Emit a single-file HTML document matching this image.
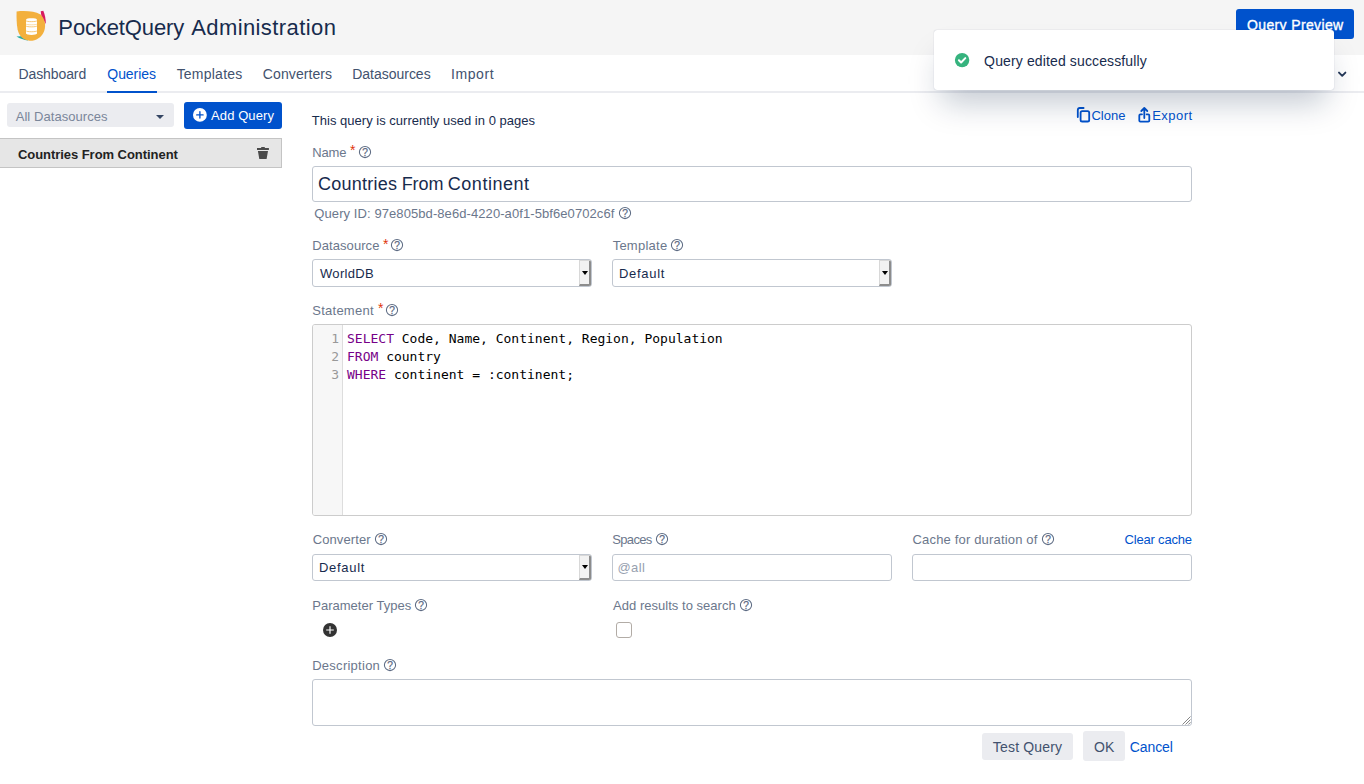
<!DOCTYPE html>
<html lang="en">
<head>
<meta charset="utf-8">
<title>PocketQuery Administration</title>
<style>
*{box-sizing:border-box;margin:0;padding:0}
html,body{width:1364px;height:784px;overflow:hidden;background:#fff}
body{font-family:"Liberation Sans",sans-serif;font-size:13px;color:#172b4d;position:relative}
.abs{position:absolute}
h1{font-size:22px;font-weight:400}
a{text-decoration:none;cursor:pointer}
label{font-weight:400}
.t{position:absolute;white-space:pre;line-height:20px;height:20px}
#header{left:0;top:0;width:1364px;height:55px;background:#f5f5f5}
#nav{left:0;top:55px;width:1364px;height:38px;background:#fff;border-bottom:2px solid #ebecf0}
.box{position:absolute;border:1px solid #c1c7d0;border-radius:3px;background:#fff}
.ddb{position:absolute;right:0;top:0;bottom:0;width:12px;background:#f2f2f2;border-left:1px solid #d8d8d8;border-top:1px solid #d8d8d8;border-right:2px solid #8c8c8c;border-bottom:2px solid #8c8c8c;border-radius:0 2px 2px 0}
.ddb:after{content:"";position:absolute;left:1.5px;top:50%;margin-top:-2px;border:3.2px solid transparent;border-top:4px solid #000;border-bottom:0}
.cm{position:absolute;white-space:pre;font-family:"DejaVu Sans Mono","Liberation Mono",monospace;font-size:13px;line-height:18px;height:18px;color:#000}
.kw{color:#770088}
.ln{color:#999;text-align:right;width:24px}
</style>
</head>
<body>

<div id="header" class="abs"></div>
<svg class="abs" style="left:14px;top:9px" width="34" height="34" viewBox="0 0 34 34">
  <path d="M2.5 27.5 C6 29.5 10 31 14 31.5 L12 27 Z" fill="#1fa9a4"/>
  <path d="M26.7 2.3 L29.3 1.7 C30.9 5.5 31.9 10 31.8 15 L27.5 8 Z" fill="#d81b60"/>
  <path d="M2.6 2.4 C12 1.6 21 2.2 26 5.2 C31 9 32.2 16 30.2 22 C27.8 28.6 21.6 32 15.6 31.8 C9.4 31.4 5 27.2 3.6 20.6 C2.6 15 2.4 8 2.6 2.4 Z" fill="#f3b03d"/>
  <path d="M12 10.4 C12 8.8 23 8.8 23 10.4 L23 24.6 C23 26.4 12 26.4 12 24.6 Z" fill="#fff"/>
  <g fill="none" stroke="#f3b03d" stroke-width="0.7">
    <path d="M12 11.6 C12 13 23 13 23 11.6"/>
    <path d="M12 14.9 C12 16.1 23 16.1 23 14.9" stroke-width="0.45"/>
    <path d="M12 16.8 C12 18.2 23 18.2 23 16.8"/>
    <path d="M12 21.7 C12 23.1 23 23.1 23 21.7"/>
  </g>
</svg>
<h1><span class="t" style="left:58.33px;top:12.04px;font-size:22px;color:#172b4d;letter-spacing:-0.122px;line-height:32px;height:32px">PocketQuery</span> <span class="t" style="left:191.18px;top:12.04px;font-size:22px;color:#172b4d;letter-spacing:0.408px;line-height:32px;height:32px">Administration</span></h1>
<div class="abs" style="left:1236px;top:9px;width:118px;height:30px;background:#0052cc;border-radius:3px"></div>
<div class="t" style="left:1247.01px;top:14.74px;font-size:14px;color:#fff;letter-spacing:0.362px;-webkit-text-stroke:0.35px #fff">Query Preview</div>
<div id="nav" class="abs"></div>
<a class="t" style="left:18.45px;top:63.74px;font-size:14px;color:#42526e;letter-spacing:-0.089px">Dashboard</a>
<a class="t" style="left:107.31px;top:63.74px;font-size:14px;color:#0052cc;letter-spacing:-0.057px">Queries</a>
<a class="t" style="left:176.64px;top:63.74px;font-size:14px;color:#42526e;letter-spacing:0.229px">Templates</a>
<a class="t" style="left:262.85px;top:63.74px;font-size:14px;color:#42526e;letter-spacing:0.088px">Converters</a>
<a class="t" style="left:352.25px;top:63.74px;font-size:14px;color:#42526e;letter-spacing:-0.021px">Datasources</a>
<a class="t" style="left:451.04px;top:63.74px;font-size:14px;color:#42526e;letter-spacing:0.585px">Import</a>
<div class="abs" style="left:107px;top:91px;width:50px;height:2px;background:#0052cc"></div>
<svg class="abs" style="left:1336px;top:68px" width="12" height="12" viewBox="0 0 12 12"><path d="M3 4.6 L6.2 7.8 L9.4 4.6" fill="none" stroke="#253858" stroke-width="1.9" stroke-linecap="round" stroke-linejoin="round"/></svg>
<div class="abs" style="left:7px;top:103px;width:167px;height:24px;background:#ebecf0;border-radius:3px"></div>
<div class="t" style="left:15.67px;top:106.82px;font-size:13px;color:#7a869a;letter-spacing:0.064px">All Datasources</div>
<div class="abs" style="left:156px;top:115px;width:0;height:0;border:4px solid transparent;border-top:4px solid #344563;border-bottom:0"></div>
<div class="abs" style="left:184px;top:102px;width:98px;height:27px;background:#0052cc;border-radius:3px"></div>
<svg class="abs" style="left:192px;top:107px" width="16" height="16" viewBox="0 0 16 16"><circle cx="7.9" cy="7.9" r="6.9" fill="#fff"/><path d="M7.9 4.7 V11.1 M4.7 7.9 H11.1" stroke="#0052cc" stroke-width="1.35" stroke-linecap="round"/></svg>
<div class="t" style="left:211.07px;top:105.92px;font-size:13px;color:#fff;letter-spacing:0.090px">Add Query</div>
<div class="abs" style="left:-1px;top:138px;width:283px;height:30px;background:#e6e6e6;border:1px solid #c4c4c4"></div>
<div class="t" style="left:17.92px;top:144.82px;font-size:13px;color:#222;letter-spacing:-0.046px;font-weight:700">Countries From Continent</div>
<svg class="abs" style="left:256px;top:146px" width="14" height="14" viewBox="0 0 14 14"><path d="M5.2 0.9 H8.8 V2 H12.9 V4.1 H1 V2 H5.2 Z M1.9 5 H12 L10.6 13 H3.3 Z" fill="#4a4a4a"/></svg>
<div class="t" style="left:311.84px;top:110.82px;font-size:13px;color:#172b4d;letter-spacing:0.016px">This query is currently used in 0 pages</div>
<svg class="abs" style="left:1075px;top:106px" width="17" height="18" viewBox="0 0 17 18"><g fill="none" stroke="#0052cc" stroke-width="1.8" stroke-linejoin="round" stroke-linecap="round"><path d="M2.8 11 V4 Q2.8 2 4.8 2 H8.6"/><rect x="5.6" y="5.2" width="8.6" height="10.3" rx="1.6"/></g></svg>
<a class="t" style="left:1091.41px;top:106.02px;font-size:13px;color:#0052cc;letter-spacing:0.009px">Clone</a>
<svg class="abs" style="left:1137px;top:106px" width="15" height="18" viewBox="0 0 15 18"><g fill="none" stroke="#0052cc" stroke-width="1.8" stroke-linejoin="round" stroke-linecap="round"><path d="M5 8.3 H3.4 Q2.3 8.3 2.3 9.4 V14.6 Q2.3 15.7 3.4 15.7 H11.2 Q12.3 15.7 12.3 14.6 V9.4 Q12.3 8.3 11.2 8.3 H9.6"/><path d="M7.3 12 V2.4 M4.3 5 L7.3 2 L10.3 5"/></g></svg>
<a class="t" style="left:1152.22px;top:106.02px;font-size:13px;color:#0052cc;letter-spacing:0.458px">Export</a>
<label class="t" style="left:312.22px;top:143.02px;font-size:13px;color:#6b778c;letter-spacing:-0.157px">Name</label>
<div class="t" style="left:350.0px;top:143.2px;font-size:14px;color:#de350b;line-height:14px;height:14px">*</div>
<svg class="abs" style="left:357.9px;top:145.4px" width="14" height="14" viewBox="0 0 14 14"><circle cx="7" cy="7" r="5.6" fill="none" stroke="#5e6c84" stroke-width="1.05"/><text x="7.1" y="10.6" text-anchor="middle" font-family="Liberation Sans,sans-serif" font-size="10.2" fill="#5e6c84" stroke="#5e6c84" stroke-width="0.25">?</text></svg>
<div class="box" style="left:312px;top:166px;width:880px;height:36px"></div>
<div><span class="t" style="left:318.09px;top:168.24px;font-size:18px;color:#172b4d;letter-spacing:0.250px;line-height:32px;height:32px">Countries</span> <span class="t" style="left:401.69px;top:168.24px;font-size:18px;color:#172b4d;letter-spacing:-0.073px;line-height:32px;height:32px">From</span> <span class="t" style="left:447.79px;top:168.24px;font-size:18px;color:#172b4d;letter-spacing:0.529px;line-height:32px;height:32px">Continent</span></div>
<div class="t" style="left:314.34px;top:203.72px;font-size:13px;color:#6b778c;letter-spacing:0.082px">Query ID: 97e805bd-8e6d-4220-a0f1-5bf6e0702c6f</div>
<svg class="abs" style="left:618.0px;top:206.0px" width="14" height="14" viewBox="0 0 14 14"><circle cx="7" cy="7" r="5.6" fill="none" stroke="#5e6c84" stroke-width="1.05"/><text x="7.1" y="10.6" text-anchor="middle" font-family="Liberation Sans,sans-serif" font-size="10.2" fill="#5e6c84" stroke="#5e6c84" stroke-width="0.25">?</text></svg>
<label class="t" style="left:312.22px;top:236.32px;font-size:13px;color:#6b778c;letter-spacing:0.081px">Datasource</label>
<div class="t" style="left:383.0px;top:236.5px;font-size:14px;color:#de350b;line-height:14px;height:14px">*</div>
<svg class="abs" style="left:390.2px;top:238.4px" width="14" height="14" viewBox="0 0 14 14"><circle cx="7" cy="7" r="5.6" fill="none" stroke="#5e6c84" stroke-width="1.05"/><text x="7.1" y="10.6" text-anchor="middle" font-family="Liberation Sans,sans-serif" font-size="10.2" fill="#5e6c84" stroke="#5e6c84" stroke-width="0.25">?</text></svg>
<div class="box" style="left:312px;top:259px;width:280px;height:28px"><div class="ddb"></div></div>
<div class="t" style="left:320.01px;top:263.82px;font-size:13px;color:#172b4d;letter-spacing:0.310px">WorldDB</div>
<label class="t" style="left:612.64px;top:236.32px;font-size:13px;color:#6b778c;letter-spacing:0.257px">Template</label>
<svg class="abs" style="left:670.0px;top:238.4px" width="14" height="14" viewBox="0 0 14 14"><circle cx="7" cy="7" r="5.6" fill="none" stroke="#5e6c84" stroke-width="1.05"/><text x="7.1" y="10.6" text-anchor="middle" font-family="Liberation Sans,sans-serif" font-size="10.2" fill="#5e6c84" stroke="#5e6c84" stroke-width="0.25">?</text></svg>
<div class="box" style="left:612px;top:259px;width:280px;height:28px"><div class="ddb"></div></div>
<div class="t" style="left:619.02px;top:263.82px;font-size:13px;color:#172b4d;letter-spacing:0.691px">Default</div>
<label class="t" style="left:312.23px;top:300.92px;font-size:13px;color:#6b778c;letter-spacing:0.259px">Statement</label>
<div class="t" style="left:378.0px;top:301.1px;font-size:14px;color:#de350b;line-height:14px;height:14px">*</div>
<svg class="abs" style="left:385.3px;top:303.0px" width="14" height="14" viewBox="0 0 14 14"><circle cx="7" cy="7" r="5.6" fill="none" stroke="#5e6c84" stroke-width="1.05"/><text x="7.1" y="10.6" text-anchor="middle" font-family="Liberation Sans,sans-serif" font-size="10.2" fill="#5e6c84" stroke="#5e6c84" stroke-width="0.25">?</text></svg>
<div class="abs" style="left:312px;top:324px;width:880px;height:192px;border:1px solid #ccc;border-radius:3px;background:#fff;overflow:hidden"><div class="abs" style="left:0;top:0;width:30px;height:190px;background:#f7f7f7;border-right:1px solid #ddd"></div></div>
<div class="cm ln" style="left:315px;top:330px">1</div>
<div class="cm" style="left:347px;top:330px"><span class="kw">SELECT</span> Code, Name, Continent, Region, Population</div>
<div class="cm ln" style="left:315px;top:348px">2</div>
<div class="cm" style="left:347px;top:348px"><span class="kw">FROM</span> country</div>
<div class="cm ln" style="left:315px;top:366px">3</div>
<div class="cm" style="left:347px;top:366px"><span class="kw">WHERE</span> continent = :continent;</div>
<label class="t" style="left:312.71px;top:530.12px;font-size:13px;color:#6b778c;letter-spacing:0.096px">Converter</label>
<svg class="abs" style="left:374.0px;top:532.3px" width="14" height="14" viewBox="0 0 14 14"><circle cx="7" cy="7" r="5.6" fill="none" stroke="#5e6c84" stroke-width="1.05"/><text x="7.1" y="10.6" text-anchor="middle" font-family="Liberation Sans,sans-serif" font-size="10.2" fill="#5e6c84" stroke="#5e6c84" stroke-width="0.25">?</text></svg>
<div class="box" style="left:312px;top:554px;width:280px;height:27px"><div class="ddb"></div></div>
<div class="t" style="left:319.02px;top:557.92px;font-size:13px;color:#172b4d;letter-spacing:0.691px">Default</div>
<label class="t" style="left:612.23px;top:530.12px;font-size:13px;color:#6b778c;letter-spacing:-0.654px">Spaces</label>
<svg class="abs" style="left:655.4px;top:532.3px" width="14" height="14" viewBox="0 0 14 14"><circle cx="7" cy="7" r="5.6" fill="none" stroke="#5e6c84" stroke-width="1.05"/><text x="7.1" y="10.6" text-anchor="middle" font-family="Liberation Sans,sans-serif" font-size="10.2" fill="#5e6c84" stroke="#5e6c84" stroke-width="0.25">?</text></svg>
<div class="box" style="left:612px;top:554px;width:280px;height:27px"></div>
<div class="t" style="left:617.49px;top:557.92px;font-size:13px;color:#97a0af;letter-spacing:0.382px">@all</div>
<label class="t" style="left:912.51px;top:530.12px;font-size:13px;color:#6b778c;letter-spacing:0.172px">Cache for duration of</label>
<svg class="abs" style="left:1040.5px;top:532.3px" width="14" height="14" viewBox="0 0 14 14"><circle cx="7" cy="7" r="5.6" fill="none" stroke="#5e6c84" stroke-width="1.05"/><text x="7.1" y="10.6" text-anchor="middle" font-family="Liberation Sans,sans-serif" font-size="10.2" fill="#5e6c84" stroke="#5e6c84" stroke-width="0.25">?</text></svg>
<a class="t" style="left:1124.61px;top:530.12px;font-size:13px;color:#0052cc;letter-spacing:-0.197px">Clear cache</a>
<div class="box" style="left:912px;top:554px;width:280px;height:27px"></div>
<label class="t" style="left:312.22px;top:595.92px;font-size:13px;color:#6b778c;letter-spacing:0.012px">Parameter Types</label>
<svg class="abs" style="left:414.3px;top:597.9px" width="14" height="14" viewBox="0 0 14 14"><circle cx="7" cy="7" r="5.6" fill="none" stroke="#5e6c84" stroke-width="1.05"/><text x="7.1" y="10.6" text-anchor="middle" font-family="Liberation Sans,sans-serif" font-size="10.2" fill="#5e6c84" stroke="#5e6c84" stroke-width="0.25">?</text></svg>
<svg class="abs" style="left:322px;top:622px" width="16" height="16" viewBox="0 0 16 16"><circle cx="8" cy="8" r="7" fill="#333"/><path d="M8 4.2 V11.8 M4.2 8 H11.8" stroke="#fff" stroke-width="1.15"/></svg>
<label class="t" style="left:613.07px;top:595.92px;font-size:13px;color:#6b778c;letter-spacing:0.028px">Add results to search</label>
<svg class="abs" style="left:738.9px;top:598.2px" width="14" height="14" viewBox="0 0 14 14"><circle cx="7" cy="7" r="5.6" fill="none" stroke="#5e6c84" stroke-width="1.05"/><text x="7.1" y="10.6" text-anchor="middle" font-family="Liberation Sans,sans-serif" font-size="10.2" fill="#5e6c84" stroke="#5e6c84" stroke-width="0.25">?</text></svg>
<div class="abs" style="left:616px;top:622px;width:16px;height:16px;border:1px solid #b2aca6;border-radius:3px;background:#fff"></div>
<label class="t" style="left:312.22px;top:655.82px;font-size:13px;color:#6b778c;letter-spacing:0.261px">Description</label>
<svg class="abs" style="left:383.0px;top:658.0px" width="14" height="14" viewBox="0 0 14 14"><circle cx="7" cy="7" r="5.6" fill="none" stroke="#5e6c84" stroke-width="1.05"/><text x="7.1" y="10.6" text-anchor="middle" font-family="Liberation Sans,sans-serif" font-size="10.2" fill="#5e6c84" stroke="#5e6c84" stroke-width="0.25">?</text></svg>
<div class="box" style="left:312px;top:679px;width:880px;height:47px"></div>
<svg class="abs" style="left:1182px;top:716px" width="9" height="9" viewBox="0 0 9 9"><path d="M8.5 0.5 L0.5 8.5 M8.5 3.5 L3.5 8.5 M8.5 6.3 L6.3 8.5" stroke="#777" stroke-width="0.9" fill="none"/></svg>
<div class="abs" style="left:982px;top:733px;width:91px;height:27px;background:#ebecf0;border-radius:3px"></div>
<div class="t" style="left:992.84px;top:736.64px;font-size:14px;color:#42526e;letter-spacing:0.173px">Test Query</div>
<div class="abs" style="left:1083px;top:731px;width:42px;height:30px;background:#ebecf0;border-radius:3px"></div>
<div class="t" style="left:1093.91px;top:736.64px;font-size:14px;color:#42526e;letter-spacing:0.218px">OK</div>
<a class="t" style="left:1129.75px;top:736.64px;font-size:14px;color:#0052cc;letter-spacing:-0.092px">Cancel</a>
<div class="abs" style="left:934px;top:30px;width:400px;height:60px;background:#fff;border-radius:3px;box-shadow:0 20px 32px -8px rgba(9,30,66,.25),0 0 1px rgba(9,30,66,.31)"></div>
<svg class="abs" style="left:954px;top:52px" width="16" height="16" viewBox="0 0 16 16"><circle cx="8.1" cy="8.1" r="7.2" fill="#36b37e"/><path d="M4.9 8.3 L7.1 10.5 L11.3 6.1" fill="none" stroke="#fff" stroke-width="2" stroke-linecap="round" stroke-linejoin="round"/></svg>
<div class="t" style="left:984.11px;top:50.54px;font-size:14px;color:#172b4d;letter-spacing:0.129px">Query edited successfully</div>
</body>
</html>
